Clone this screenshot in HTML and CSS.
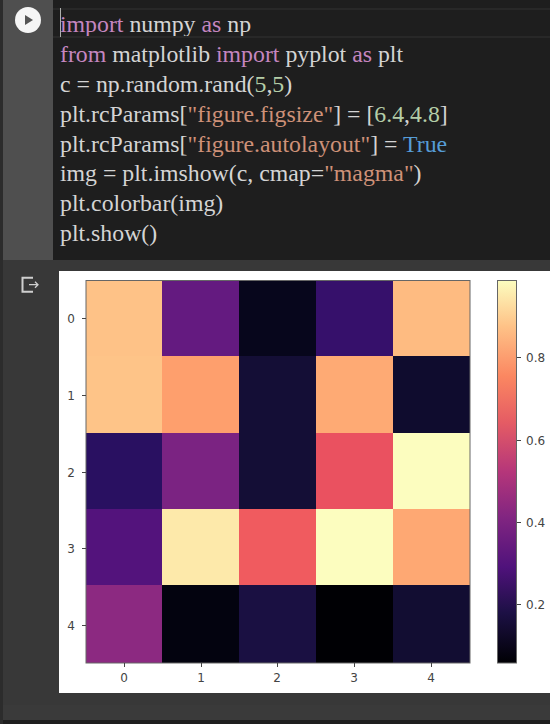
FILE: index.html
```html
<!DOCTYPE html>
<html lang="en">
<head>
    <meta charset="UTF-8">
    <meta name="viewport" content="width=device-width, initial-scale=1.0">
    <title>Notebook cell</title>
    <link rel="stylesheet" href="styles.css">
</head>
<body>

    <div class="cell">
        <div class="gutter">
            <div class="run-btn">
                <svg class="plot" width="26" height="26" viewBox="0 0 26 26"><path d="M10 8v10l8-5z" fill="#555"/></svg>
            </div>
        </div>
        <div class="code">
            <div class="line active"><span class="cursor"></span><span class="kw">import</span> numpy <span class="kw">as</span> np</div>
            <div class="line"><span class="kw">from</span> matplotlib <span class="kw">import</span> pyplot <span class="kw">as</span> plt</div>
            <div class="line">c = np.random.rand(<span class="num">5</span>,<span class="num">5</span>)</div>
            <div class="line">plt.rcParams[<span class="str">"figure.figsize"</span>] = [<span class="num">6.4</span>,<span class="num">4.8</span>]</div>
            <div class="line">plt.rcParams[<span class="str">"figure.autolayout"</span>] = <span class="bool">True</span></div>
            <div class="line">img = plt.imshow(c, cmap=<span class="str">"magma"</span>)</div>
            <div class="line">plt.colorbar(img)</div>
            <div class="line">plt.show()</div>
        </div>
    </div>

    <div class="output">
        <div class="out-icon">
            <svg width="20" height="18" viewBox="0 0 20 18" fill="none" stroke="#cfcfcf">
                <path d="M12 1.700H1.500v14H12" stroke-width="2"/>
                <path d="M8 8.700h9M14 5.700l3 3-3 3" stroke-width="1.300"/>
            </svg>
        </div>
        <div class="figure">
            <svg class="plot" width="491" height="422" viewBox="0 0 491 422">
                <defs>
                    <linearGradient id="magma" x1="0" y1="1" x2="0" y2="0">
                        <stop offset="0" stop-color="#000004"/>
                        <stop offset="0.13" stop-color="#1c1044"/>
                        <stop offset="0.25" stop-color="#4f127b"/>
                        <stop offset="0.38" stop-color="#812581"/>
                        <stop offset="0.5" stop-color="#b5367a"/>
                        <stop offset="0.63" stop-color="#e55c64"/>
                        <stop offset="0.75" stop-color="#fb8761"/>
                        <stop offset="0.88" stop-color="#fec287"/>
                        <stop offset="1" stop-color="#fcfdbf"/>
                    </linearGradient>
                </defs>

                <!-- heatmap -->
                <g>
                    <rect x="27" y="9" width="76" height="76" fill="#fec287"/>
                    <rect x="103" y="9" width="77" height="76" fill="#641a80"/>
                    <rect x="180" y="9" width="77" height="76" fill="#07061c"/>
                    <rect x="257" y="9" width="77" height="76" fill="#36106b"/>
                    <rect x="334" y="9" width="77" height="76" fill="#febb81"/>

                    <rect x="27" y="85" width="76" height="77" fill="#fec488"/>
                    <rect x="103" y="85" width="77" height="77" fill="#fe9f6d"/>
                    <rect x="180" y="85" width="77" height="77" fill="#140e36"/>
                    <rect x="257" y="85" width="77" height="77" fill="#feaa74"/>
                    <rect x="334" y="85" width="77" height="77" fill="#0f0c2e"/>

                    <rect x="27" y="162" width="76" height="76" fill="#291061"/>
                    <rect x="103" y="162" width="77" height="76" fill="#7b2382"/>
                    <rect x="180" y="162" width="77" height="76" fill="#140e36"/>
                    <rect x="257" y="162" width="77" height="76" fill="#ea5160"/>
                    <rect x="334" y="162" width="77" height="76" fill="#fcfdbf"/>

                    <rect x="27" y="238" width="76" height="76" fill="#53137c"/>
                    <rect x="103" y="238" width="77" height="76" fill="#fde9aa"/>
                    <rect x="180" y="238" width="77" height="76" fill="#f05b5f"/>
                    <rect x="257" y="238" width="77" height="76" fill="#fcfdbf"/>
                    <rect x="334" y="238" width="77" height="76" fill="#fea873"/>

                    <rect x="27" y="314" width="76" height="78" fill="#8c2981"/>
                    <rect x="103" y="314" width="77" height="78" fill="#03030f"/>
                    <rect x="180" y="314" width="77" height="78" fill="#1a1042"/>
                    <rect x="257" y="314" width="77" height="78" fill="#000004"/>
                    <rect x="334" y="314" width="77" height="78" fill="#120d32"/>
                </g>
                <rect class="frame" x="27" y="9.500" width="384" height="382.500"/>

                <!-- ticks -->
                <path class="tick" d="M23 47.500h4M23 124.500h4M23 201.500h4M23 277.500h4M23 354.500h4"/>
                <path class="tick" d="M65.500 392v4M142.500 392v4M218.500 392v4M295.500 392v4M372.500 392v4"/>
                <g class="label" text-anchor="middle">
                    <text x="12" y="52">0</text>
                    <text x="12" y="129">1</text>
                    <text x="12" y="206">2</text>
                    <text x="12" y="282">3</text>
                    <text x="12" y="359">4</text>
                    <text x="65" y="411">0</text>
                    <text x="142" y="411">1</text>
                    <text x="218" y="411">2</text>
                    <text x="295" y="411">3</text>
                    <text x="372" y="411">4</text>
                </g>

                <!-- colorbar -->
                <rect x="438.500" y="9.500" width="19" height="382.500" fill="url(#magma)" class="frame-bar"/>
                <path class="tick" d="M458 86.500h4M458 169.500h4M458 251.500h4M458 333.500h4"/>
                <g class="label">
                    <text x="467" y="91">0.8</text>
                    <text x="467" y="174">0.6</text>
                    <text x="467" y="256">0.4</text>
                    <text x="467" y="338">0.2</text>
                </g>
            </svg>
        </div>
    </div>

    <div class="cell-foot"></div>
    <div class="bottom-bar"></div>

</body>
</html>
```

FILE: styles.css
```css
html, body {
    margin: 0;
    height: 100%;
}

body {
    background-color: #2c2c2c;
    overflow: hidden;
    padding-left: 3px;
    box-sizing: border-box;
    font-family: "Liberation Serif", serif;
}

.cell {
    display: flex;
    height: 260px;
    background-color: #1e1e1e;
}

.gutter {
    width: 50px;
    flex-shrink: 0;
    background-color: #4f4f4f;
    padding: 7px 0 0 12px;
    box-sizing: border-box;
}

.run-btn {
    width: 26px;
    height: 26px;
    border-radius: 50%;
    background-color: #f5f5f5;
}

.code {
    flex: 1;
    padding: 10px 0 0 7px;
    font-size: 23.800px;
    line-height: 29.900px;
    color: #d4d4d4;
}

.line {
    position: relative;
    height: 29.900px;
    white-space: pre;
}

.line.active::before {
    content: "";
    position: absolute;
    left: -7px;
    right: 0;
    top: -2px;
    height: 26px;
    border-top: 2px solid #282828;
    border-bottom: 2px solid #282828;
}

.cursor {
    position: absolute;
    left: 0;
    top: -2px;
    width: 1px;
    height: 29px;
    background-color: #aeafad;
}

.kw { color: #c586c0; }
.num { color: #b5cea8; }
.str { color: #ce9178; }
.bool { color: #569cd6; }

.output {
    display: flex;
    height: 445px;
    box-sizing: border-box;
    padding-top: 11px;
    background-color: #383838;
}

.out-icon {
    width: 56px;
    flex-shrink: 0;
    padding: 5px 0 0 18px;
    box-sizing: border-box;
}

.figure {
    flex: 1;
    background-color: #fff;
    height: 422px;
}

.plot {
    display: block;
}

.frame, .frame-bar {
    stroke: #666;
    stroke-width: 1;
}

.frame {
    fill: none;
}

.tick {
    fill: none;
    stroke: #444;
    stroke-width: 1;
}

.label {
    font-family: "DejaVu Sans", sans-serif;
    font-size: 12px;
    fill: #444;
}

.cell-foot {
    height: 15px;
    background-color: #3a3a3a;
}

.bottom-bar {
    height: 4px;
    background-color: #1e1e1e;
}
```
